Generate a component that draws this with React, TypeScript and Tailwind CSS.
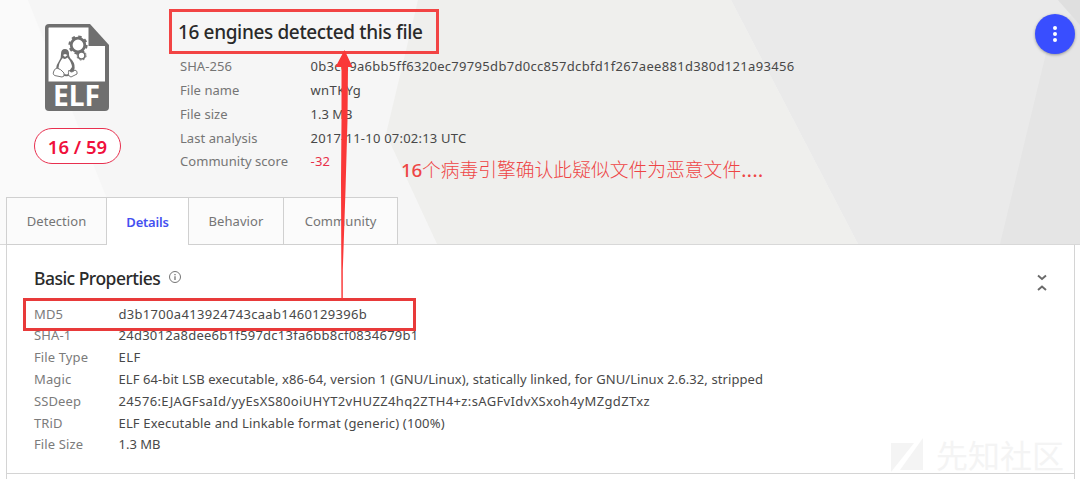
import React from "react";

type Row = { label: string; value: string; spacing: string; tone?: string };

const summary: Row[] = [
  { label: "SHA-256", value: "0b3cd9a6bb5ff6320ec79795db7d0cc857dcbfd1f267aee881d380d121a93456", spacing: "tracking-[0.31px]" },
  { label: "File name", value: "wnTKYg", spacing: "tracking-[0.4px]" },
  { label: "File size", value: "1.3 MB", spacing: "tracking-[0px]" },
  { label: "Last analysis", value: "2017-11-10 07:02:13 UTC", spacing: "tracking-[0.22px]" },
  { label: "Community score", value: "-32", spacing: "tracking-[0.2px]", tone: "text-[#e8304a]" },
];

const properties: Row[] = [
  { label: "MD5", value: "d3b1700a413924743caab1460129396b", spacing: "tracking-[0.31px]" },
  { label: "SHA-1", value: "24d3012a8dee6b1f597dc13fa6bb8cf0834679b1", spacing: "tracking-[0.26px]" },
  { label: "File Type", value: "ELF", spacing: "tracking-[0.5px]" },
  { label: "Magic", value: "ELF 64-bit LSB executable, x86-64, version 1 (GNU/Linux), statically linked, for GNU/Linux 2.6.32, stripped", spacing: "tracking-[0.084px]" },
  { label: "SSDeep", value: "24576:EJAGFsaId/yyEsXS80oiUHYT2vHUZZ4hq2ZTH4+z:sAGFvIdvXSxoh4yMZgdZTxz", spacing: "tracking-[0.36px]" },
  { label: "TRiD", value: "ELF Executable and Linkable format (generic) (100%)", spacing: "tracking-[0.165px]" },
  { label: "File Size", value: "1.3 MB", spacing: "tracking-[0px]" },
];

function Backdrop() {
  return (
    <svg className="absolute inset-0 h-[244px] w-[1080px]" viewBox="0 0 1080 244" aria-hidden="true">
      <rect width="1080" height="244" fill="#f6f6f6" />
      <path d="M0 0H28L125 244H0Z" fill="#fafafa" />
      <path d="M418 0H731L858 244H437L386 134Z" fill="#efefed" />
      <path d="M731 0H1080V244H858Z" fill="#eaeaea" />
      <path d="M1058 0H1080V244H1000L1048 45L1071 15Z" fill="#e5e5e5" />
      <path d="M1058 0H1080V25Z" fill="#dfdfdf" />
    </svg>
  );
}

function FileIcon() {
  return (
    <svg className="block h-[88px] w-16 overflow-visible" viewBox="0 0 64 88">
      <path d="M4 0H45L64 21V83Q64 87 60 87H4Q0 87 0 83V4Q0 0 4 0Z" fill="#6f6f6f" />
      <path d="M4 3.5H43.500V22H60V57.500H3.500V4Z" fill="#fff" />
      <circle cx="33" cy="21" r="6.800" fill="#fff" stroke="#6f6f6f" strokeWidth="2.800" />
      <circle cx="33" cy="21" r="8.600" fill="none" stroke="#6f6f6f" strokeWidth="2" strokeDasharray="3.400 3.350" />
      <circle cx="36.500" cy="31.500" r="3.500" fill="#fff" stroke="#6f6f6f" strokeWidth="1.700" />
      <circle cx="36.500" cy="31.500" r="4.600" fill="none" stroke="#6f6f6f" strokeWidth="1" strokeDasharray="1.900 1.700" />
      <path d="M20 25Q16 25 16 30Q16.500 34 13.500 38Q10 43 12 48Q16 53 24 52L29 47Q31 41 27 36Q23.500 33 24 29Q23.500 25 20 25Z" fill="#6f6f6f" />
      <path d="M17.800 34Q20 36 22.500 33.500Q26.500 38 27 43Q24 46 24 50Q19 51.500 17 48L13.500 44Q14 38 17.800 34Z" fill="#fff" />
      <path d="M18 31L20 30L22.500 31L20 33Z" fill="#fff" />
      <path d="M12 44Q9 45 8.500 48Q7.500 50 9.500 51.500L17 53Q20 53 19 49Q16 45 12 44ZM24 46Q26 50 30 46Q33 47 32 50L26 53Q22 52 24 46Z" fill="#fff" stroke="#777" strokeWidth="1" />
      <text x="31.500" y="82" textAnchor="middle" textLength="47" lengthAdjust="spacingAndGlyphs" fill="#fff" fontFamily="Noto Sans, sans-serif" fontSize="29" fontWeight="700">ELF</text>
    </svg>
  );
}

function Tab({ label, width, active }: { label: string; width: string; active?: boolean }) {
  return (
    <div className={`${width} flex h-12 items-center justify-center border-t border-r border-[#d0d0d0] text-[13px] ${active ? "bg-white pt-[2px] font-semibold tracking-[-0.2px] text-[#4450f0]" : "border-b bg-[#fbfbfb] pt-[2px] tracking-[0.06px] text-[#757575]"}`}>
      {label}
    </div>
  );
}

export default function App() {
  return (
    <div className="relative h-[479px] w-[1080px] overflow-hidden bg-white font-['Noto_Sans','Noto_Sans_CJK_SC',sans-serif] text-[13px] text-[#484848]">
      <header className="relative flex h-[197px]">
        <Backdrop />
        <div className="relative flex w-[180px] flex-col pl-[34px] pt-6">
          <div className="h-[88px] pl-[11px]"><FileIcon /></div>
          <div className="mt-4 flex h-9 w-[87px] items-center justify-center rounded-full border border-[#e8304f] bg-white pt-px text-[18.500px] leading-[34px] font-semibold text-[#f0103c]">
            16 / 59
          </div>
        </div>
        <div className="relative flex-1 pt-[18px]">
          <h1 className="-ml-[2px] h-[37px] text-[19px] leading-7 font-medium tracking-[-0.36px] whitespace-nowrap text-[#2a2a2a]">16 engines detected this file</h1>
          <dl>
            {summary.map((r) => (
              <div key={r.label} className="flex h-[23.800px] items-center whitespace-nowrap">
                <dt className="w-[130.500px] tracking-[0.05px] text-[#757575]">{r.label}</dt>
                <dd className={`${r.spacing} ${r.tone ?? ""}`}><span>{r.value}</span></dd>
              </div>
            ))}
          </dl>
        </div>
        <button className="absolute top-[14px] right-[5px] flex size-10 items-center justify-center rounded-full bg-[#394eff] shadow-[0_1px_3px_rgba(0,0,0,0.35)]" aria-label="Menu">
          <svg className="size-6" viewBox="0 0 24 24" fill="#fff"><circle cx="12" cy="6" r="2" /><circle cx="12" cy="12" r="2" /><circle cx="12" cy="18" r="2" /></svg>
        </button>
      </header>

      <nav className="relative flex h-12">
        <div className="w-[6px] border-b border-[#d8d8d8]" />
        <div className="flex border-l border-[#d0d0d0]">
          <Tab label="Detection" width="w-[100px]" />
          <Tab label="Details" width="w-[82px]" active />
          <Tab label="Behavior" width="w-[95px]" />
          <Tab label="Community" width="w-[114px]" />
        </div>
        <div className="h-12 flex-1 border-b border-[#d8d8d8]" />
      </nav>

      <main className="mr-[5px] ml-[6px] h-[234px] border-x border-[#d4d4d4]">
        <section className="h-[229px] border-b border-[#d4d4d4] pl-[27px]">
          <div className="flex h-[58.500px] items-start justify-between pt-[20px] pr-[25px]">
            <h2 className="flex items-center text-[17.500px] leading-[26px] font-medium tracking-[-0.52px] text-[#2a2a2a]">
              <span>Basic Properties</span>
              <svg className="ml-2 size-3.5" viewBox="0 0 14 14" fill="none" stroke="#757575"><circle cx="7" cy="6" r="5.500" /><path d="M7 5.200V9M7 3V4.200" strokeWidth="1.300" /></svg>
            </h2>
            <svg className="mt-[8px] h-5 w-[14px]" viewBox="0 0 14 20" fill="none" stroke="#6a6a6a" strokeWidth="1.900"><path d="M3 2.500L7 6L11 2.500M3 17L7 13.500L11 17" /></svg>
          </div>
          <dl>
            {properties.map((r) => (
              <div key={r.label} className="flex h-[21.800px] items-center whitespace-nowrap">
                <dt className="w-[84.500px] tracking-[0.12px] text-[#7b7b7b]">{r.label}</dt>
                <dd className={r.spacing}><span>{r.value}</span></dd>
              </div>
            ))}
          </dl>
        </section>
      </main>

      <div className="absolute top-[436px] left-[890px] flex items-center gap-3 text-[#f4f4f4]">
        <svg className="h-9 w-[34px]" viewBox="0 0 34 36" fill="currentColor"><path d="M1 5H24L1 34ZM33 0V32H10Z" /></svg>
        <span className="text-[32px] leading-10">先知社区</span>
      </div>
      <div className="absolute top-[156px] left-[401px] text-[18.800px] leading-7 font-light whitespace-nowrap text-[#ee4545]">
        <span className="font-medium tracking-[-0.3px]">16</span>个病毒引擎确认此疑似文件为恶意文件<span className="font-medium tracking-[0.5px]">....</span>
      </div>
      <div className="absolute top-[9px] left-[169px] h-[45px] w-[270px] border-3 border-[#f24444]" />
      <div className="absolute top-[298px] left-[23px] h-[33px] w-[393px] border-3 border-[#e83a3a]" />
      <svg className="absolute top-[50px] left-[330px] h-[250px] w-[30px]" viewBox="0 0 30 250" fill="#fa3838"><path d="M14.500 0L22.500 17H18L17.500 70L15.500 140L12.800 220V249H11.400L11 130L11.500 70V17H5.500Z" /></svg>
    </div>
  );
}
